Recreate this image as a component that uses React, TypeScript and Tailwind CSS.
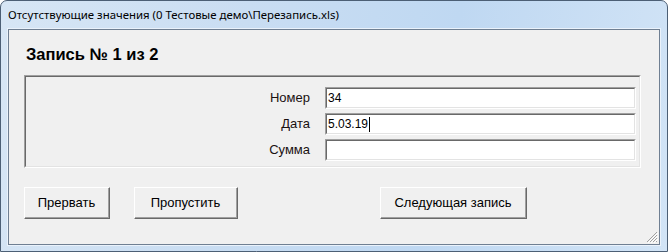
import React from 'react';

const sunkenOuter = 'border-t border-l border-t-[#a0a0a0] border-l-[#a0a0a0] border-r border-b border-r-white border-b-white';
const sunkenInner = 'border-t border-l border-t-[#696969] border-l-[#696969] border-r border-b border-r-[#e3e3e3] border-b-[#e3e3e3]';

const Field: React.FC<{ label: string; value?: string; caret?: boolean }> = ({ label, value, caret }) => (
  <div className="flex items-center h-[22px]">
    <div className="w-[299px] text-right pr-[15px] text-[13px] text-[#1a1010]">{label}</div>
    <div className={`w-[311px] h-[22px] ${sunkenOuter}`}>
      <div className={`h-full bg-white ${sunkenInner} flex items-center pl-[1px] text-[12px] text-black`}>
        {value}
        {caret && <span className="inline-block w-px h-[15px] bg-black ml-[1px]"></span>}
      </div>
    </div>
  </div>
);

const Button: React.FC<{ label: string; width: string }> = ({ label, width }) => (
  <button
    className={`${width} h-[32px] bg-[#f0f0f0] border-t border-l border-t-white border-l-white border-r border-b border-r-[#696969] border-b-[#696969] text-[13px] text-black`}
  >
    <div className="h-full border-r border-b border-r-[#a0a0a0] border-b-[#a0a0a0] flex items-center justify-center">
      {label}
    </div>
  </button>
);

export default function App() {
  return (
    <div
      className="w-[668px] h-[252px] border border-[#4c5f75] rounded-t-[7px] bg-[linear-gradient(100deg,#d7e6f5_0%,#c9ddf2_35%,#bfd8f2_65%,#d2e4f6_100%)] flex flex-col"
      style={{ fontFamily: '"Liberation Sans", Arial, sans-serif' }}
    >
      {/* title bar */}
      <div
        className="h-[28px] pl-[7px] flex items-center text-[11.4px] text-black"
        style={{ fontFamily: '"Noto Sans", "Open Sans", sans-serif' }}
      >
        Отсутствующие значения (0 Тестовые демо\Перезапись.xls)
      </div>

      {/* client area */}
      <div className="relative mx-[7px] mb-[6px] flex-1 border border-[#6f7f92] shadow-[0_0_0_1px_#eaf2fb] bg-[#f0f0f0] flex flex-col">
        <div className="pl-[17px] pt-[12px] h-[45px] text-[16.5px] font-bold text-black">Запись № 1 из 2</div>

        <div className={`ml-[15px] w-[617px] h-[93px] ${sunkenOuter}`}>
          <div className={`h-full ${sunkenInner} pt-[10px] flex flex-col gap-[4px]`}>
            <Field label="Номер" value="34" />
            <Field label="Дата" value="5.03.19" caret />
            <Field label="Сумма" />
          </div>
        </div>

        <div className="flex mt-[19px] pl-[15px]">
          <Button label="Прервать" width="w-[86px]" />
          <div className="w-[24px]" />
          <Button label="Пропустить" width="w-[104px]" />
          <div className="w-[142px]" />
          <Button label="Следующая запись" width="w-[147px]" />
        </div>

        {/* resize grip */}
        <svg className="absolute right-[1px] bottom-[1px]" width="12" height="12" viewBox="0 0 12 12">
          <path d="M11 1L1 11M11 4L4 11M11 7L7 11M11 10L10 11" stroke="#a0a0a0" strokeWidth="1" />
          <path d="M12 2L2 12M12 5L5 12M12 8L8 12" stroke="#ffffff" strokeWidth="1" />
        </svg>
      </div>
    </div>
  );
}
